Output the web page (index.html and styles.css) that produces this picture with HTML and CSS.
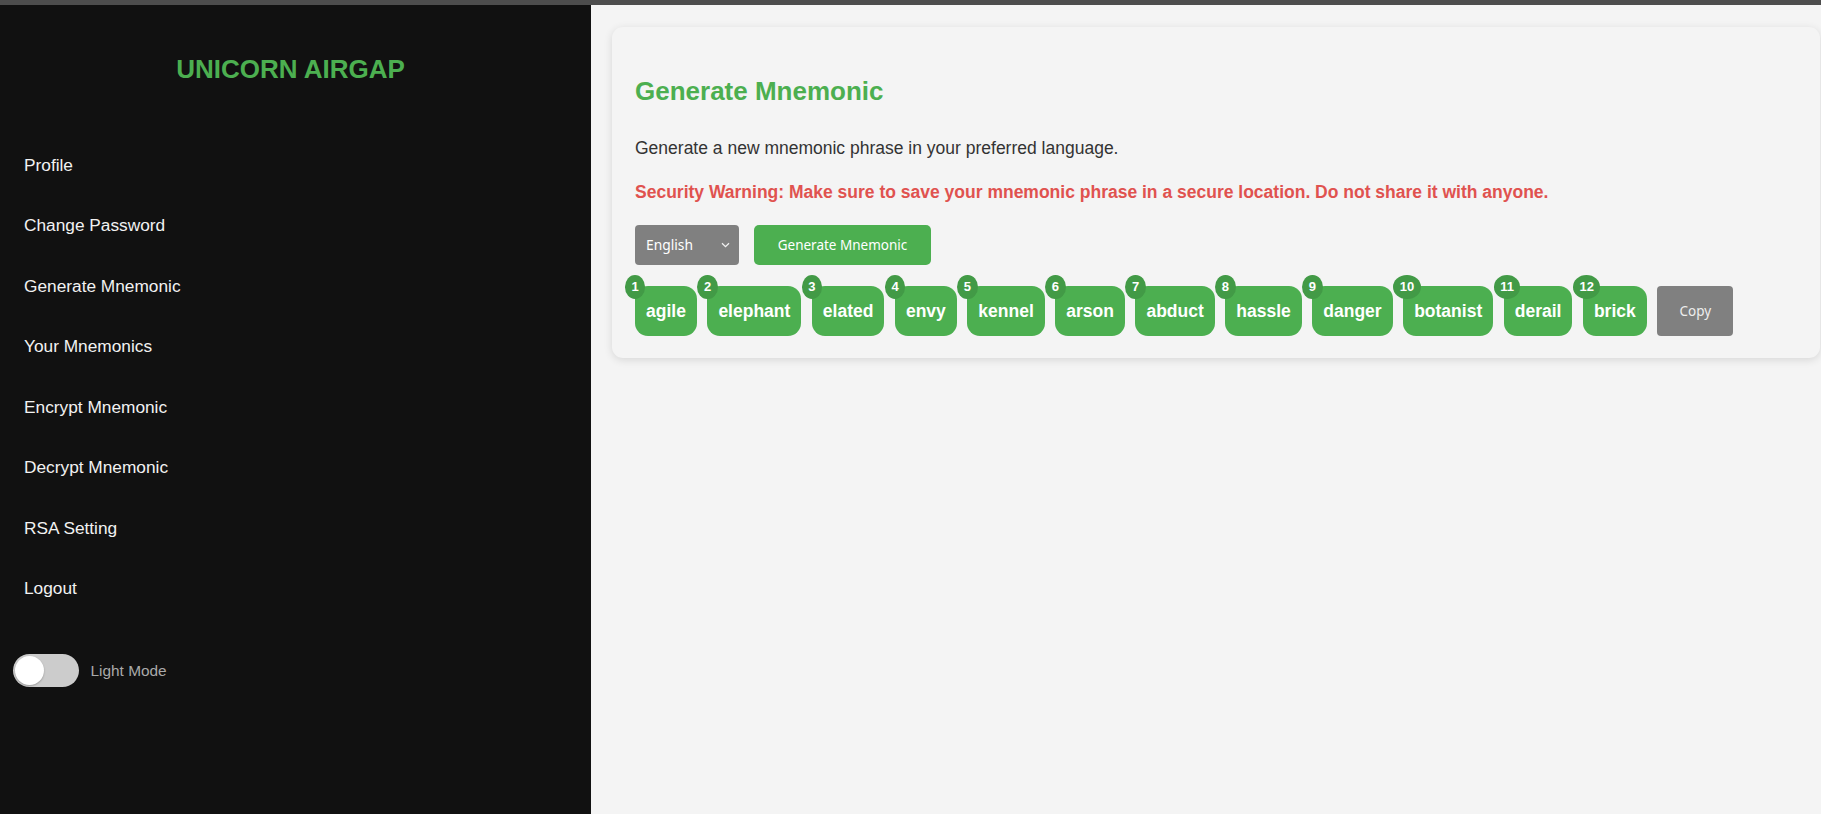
FILE: index.html
```html
<!DOCTYPE html>
<html lang="en">
<head>
<meta charset="utf-8">
<title>Unicorn Airgap - Generate Mnemonic</title>
<link rel="stylesheet" href="styles.css">
</head>
<body>
<div class="topbar"></div>
<div class="app">
  <aside class="sidebar">
    <h1 class="brand">UNICORN AIRGAP</h1>
    <nav class="nav">
      <a class="nav-item" href="#">Profile</a>
      <a class="nav-item" href="#">Change Password</a>
      <a class="nav-item" href="#">Generate Mnemonic</a>
      <a class="nav-item" href="#">Your Mnemonics</a>
      <a class="nav-item" href="#">Encrypt Mnemonic</a>
      <a class="nav-item" href="#">Decrypt Mnemonic</a>
      <a class="nav-item" href="#">RSA Setting</a>
      <a class="nav-item" href="#">Logout</a>
    </nav>
    <div class="theme-row">
      <span class="toggle"><span class="knob"></span></span>
      <span class="theme-label">Light Mode</span>
    </div>
  </aside>
  <main class="main">
    <section class="card">
      <h2 class="card-title">Generate Mnemonic</h2>
      <p class="lead">Generate a new mnemonic phrase in your preferred language.</p>
      <p class="warning">Security Warning: Make sure to save your mnemonic phrase in a secure location. Do not share it with anyone.</p>
      <div class="controls">
        <div class="select-wrap">
          <select class="select">
            <option>English</option>
          </select>
          <svg class="chevron" width="9" height="6" viewBox="0 0 9 6"><path d="M1 1.2 L4.5 4.6 L8 1.2" fill="none" stroke="#f0f0f0" stroke-width="1.3"/></svg>
        </div>
        <button class="btn btn-green">Generate Mnemonic</button>
      </div>
      <div class="words">
        <span class="word"><span class="num">1</span>agile</span>
        <span class="word"><span class="num">2</span>elephant</span>
        <span class="word"><span class="num">3</span>elated</span>
        <span class="word"><span class="num">4</span>envy</span>
        <span class="word"><span class="num">5</span>kennel</span>
        <span class="word"><span class="num">6</span>arson</span>
        <span class="word"><span class="num">7</span>abduct</span>
        <span class="word"><span class="num">8</span>hassle</span>
        <span class="word"><span class="num">9</span>danger</span>
        <span class="word"><span class="num">10</span>botanist</span>
        <span class="word"><span class="num">11</span>derail</span>
        <span class="word"><span class="num">12</span>brick</span>
        <button class="btn btn-gray copy">Copy</button>
      </div>
    </section>
  </main>
</div>
</body>
</html>
```

FILE: styles.css
```css
* { box-sizing: border-box; }
html, body { margin: 0; padding: 0; height: 100%; }
body {
  font-family: "Liberation Sans", Arial, sans-serif;
  background: #f4f4f4;
  overflow: hidden;
}
.topbar { height: 5px; background: #4d4d4d; }
.app { display: flex; height: calc(100vh - 5px); }

.sidebar {
  width: 591px;
  flex: 0 0 591px;
  background: #111111;
  padding-top: 49.5px;
}
.brand {
  margin: 0;
  padding: 0 32px 0 22px;
  text-align: center;
  font-size: 26px;
  line-height: 29px;
  font-weight: bold;
  color: #4caf50;
}
.nav { margin-top: 51.25px; display: flex; flex-direction: column; }
.nav-item {
  display: block;
  padding: 20px 24px;
  font-size: 17.3px;
  line-height: 20.5px;
  color: #f2f2f2;
  text-decoration: none;
}
.theme-row {
  margin-top: 35.25px;
  padding-left: 13px;
  display: flex;
  align-items: center;
  gap: 11.5px;
}
.toggle {
  width: 66px;
  height: 33px;
  border-radius: 16.5px;
  background: #cccccc;
  padding: 2px;
  display: flex;
}
.knob {
  width: 29px;
  height: 29px;
  border-radius: 50%;
  background: #ffffff;
  box-shadow: 0 1px 2px rgba(0,0,0,0.25);
}
.theme-label { font-size: 15.4px; color: #aaaaaa; }

.main {
  flex: 1;
  padding: 22px 1px 22px 21px;
  background: #f4f4f4;
}
.card {
  background: #f4f4f4;
  border-radius: 11px;
  box-shadow: 0 2px 8px rgba(0,0,0,0.12);
  padding: 22px 22px 22px 23px;
}
.card-title {
  margin: 27.8px 0 0;
  font-size: 26px;
  line-height: 29px;
  font-weight: bold;
  color: #4caf50;
}
.lead {
  margin: 31.9px 0 0;
  font-size: 17.5px;
  line-height: 20px;
  color: #333333;
}
.warning {
  margin: 24.1px 0 0;
  font-size: 17.5px;
  line-height: 20px;
  font-weight: bold;
  color: #e0524f;
}
.controls {
  margin-top: 23.2px;
  display: flex;
  gap: 15px;
  height: 40px;
}
.select-wrap { position: relative; width: 104px; height: 40px; }
.select {
  appearance: none;
  -webkit-appearance: none;
  width: 104px;
  height: 40px;
  border: none;
  border-radius: 4px;
  background: #808080;
  color: #ffffff;
  font-family: "Noto Sans", "Open Sans", sans-serif;
  font-size: 13.8px;
  padding: 0 0 0 11px;
}
.chevron { position: absolute; right: 9px; top: 17px; }
.btn {
  border: none;
  font-family: "Noto Sans", "Open Sans", sans-serif;
  font-size: 13.5px;
  color: #ffffff;
  cursor: pointer;
}
.btn-green {
  width: 177px;
  height: 40px;
  border-radius: 5px;
  background: #4caf50;
}
.btn-gray { background: #808080; border-radius: 4px; }
.words {
  margin-top: 21px;
  display: flex;
  align-items: center;
  gap: 10.5px;
}
.word {
  position: relative;
  display: block;
  padding: 15px 11px;
  font-size: 17.5px;
  line-height: 20px;
  font-weight: bold;
  color: #ffffff;
  background: #4caf50;
  border-radius: 13px;
}
.num {
  position: absolute;
  top: -11px;
  left: -10px;
  height: 24px;
  min-width: 20px;
  padding: 0 6.5px;
  border-radius: 50%;
  background: #429a46;
  font-size: 13px;
  line-height: 24px;
  text-align: center;
  color: #ffffff;
}
.copy {
  width: 76px;
  height: 50px;
  color: #eeeeee;
}
```
